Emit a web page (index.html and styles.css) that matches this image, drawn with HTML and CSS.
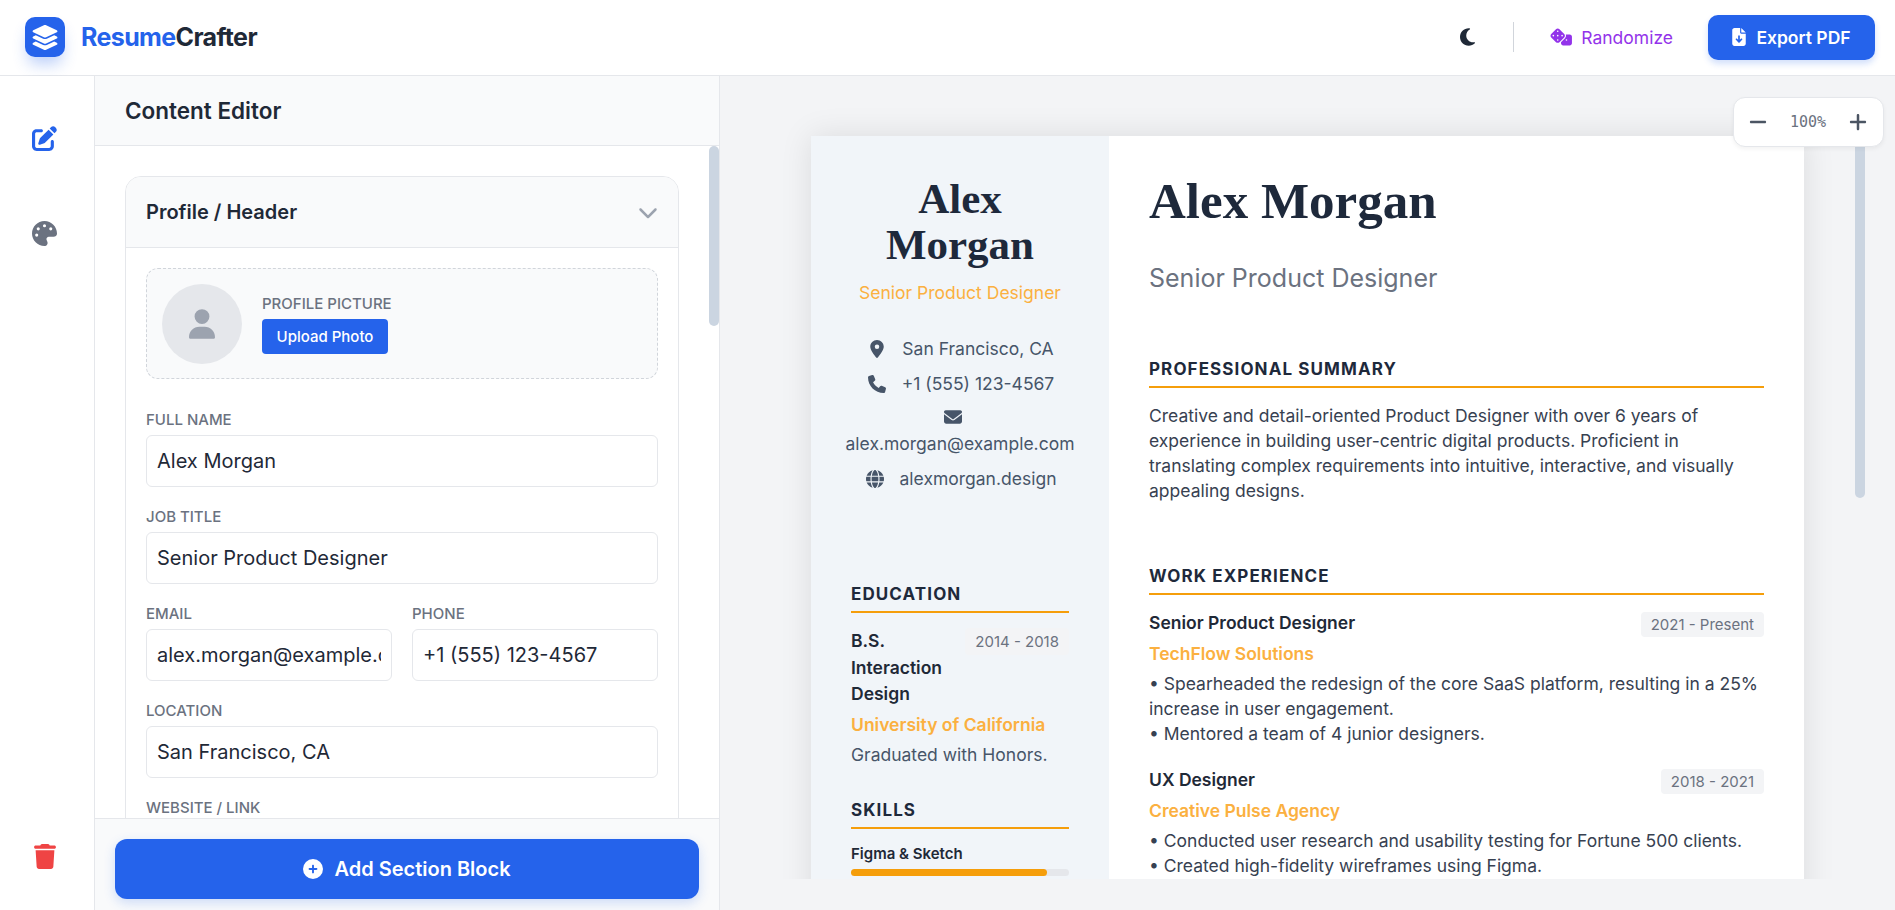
FILE: index.html
```html
<!DOCTYPE html>
<html lang="en">
<head>
  <meta charset="UTF-8" />
  <meta name="viewport" content="width=device-width, initial-scale=1.0"/>
  <title>ResumeCrafter</title>
  <link rel="stylesheet" href="styles.css">
</head>
<body>

<header class="topbar">
  <div class="brand">
    <div class="brand-logo">
      <svg viewBox="0 0 576 512" class="logo-icon"><path d="M264.5 5.2c14.9-6.9 32.1-6.9 47 0l218.6 101c8.5 3.9 13.9 12.4 13.9 21.8s-5.4 17.9-13.9 21.8l-218.6 101c-14.9 6.9-32.1 6.9-47 0L45.9 149.8C37.4 145.8 32 137.3 32 128s5.4-17.9 13.9-21.8L264.5 5.2zM476.9 209.6l53.2 24.6c8.5 3.9 13.9 12.4 13.9 21.8s-5.4 17.9-13.9 21.8l-218.6 101c-14.9 6.9-32.1 6.9-47 0L45.9 277.8C37.4 273.8 32 265.3 32 256s5.4-17.9 13.9-21.8l53.2-24.6 152 70.2c23.4 10.8 50.4 10.8 73.8 0l152-70.2zm-152 198.2l152-70.2 53.2 24.6c8.5 3.9 13.9 12.4 13.9 21.8s-5.4 17.9-13.9 21.8l-218.6 101c-14.9 6.9-32.1 6.9-47 0L45.9 405.8C37.4 401.8 32 393.3 32 384s5.4-17.9 13.9-21.8l53.2-24.6 152 70.2c23.4 10.8 50.4 10.8 73.8 0z"/></svg>
    </div>
    <div class="brand-name"><span class="brand-accent">Resume</span>Crafter</div>
  </div>
  <div class="top-actions">
    <svg viewBox="0 0 384 512" class="moon-icon"><path d="M223.5 32C100 32 0 132.3 0 256S100 480 223.5 480c60.6 0 115.5-24.2 155.8-63.4c5-4.9 6.3-12.5 3.1-18.7s-10.1-9.7-17-8.5c-9.8 1.7-19.8 2.6-30.1 2.6c-96.9 0-175.5-78.8-175.5-176c0-65.8 36-123.1 89.3-153.3c6.1-3.5 9.2-10.5 7.7-17.3s-7.3-11.9-14.3-12.5c-6.3-.5-12.6-.8-19-.8z"/></svg>
    <div class="top-divider"></div>
    <button class="btn-random">
      <svg viewBox="0 0 640 512" class="dice-icon"><path d="M274.9 34.3c-28.1-28.1-73.7-28.1-101.8 0L34.3 173.1c-28.1 28.1-28.1 73.7 0 101.8L173.1 413.7c28.1 28.1 73.7 28.1 101.8 0L413.7 274.9c28.1-28.1 28.1-73.7 0-101.8L274.9 34.3zM200 224a24 24 0 1 1 48 0 24 24 0 1 1 -48 0zM96 200a24 24 0 1 1 0 48 24 24 0 1 1 0-48zM224 376a24 24 0 1 1 0-48 24 24 0 1 1 0 48zM352 200a24 24 0 1 1 0 48 24 24 0 1 1 0-48zM224 120a24 24 0 1 1 0-48 24 24 0 1 1 0 48zm96 328c0 35.3 28.7 64 64 64H576c35.3 0 64-28.7 64-64V256c0-35.3-28.7-64-64-64H461.7c11.6 36 3.1 77-25.4 105.5L320 413.8V448zM480 328a24 24 0 1 1 0 48 24 24 0 1 1 0-48z"/></svg>
      Randomize
    </button>
    <button class="btn-export">
      <svg viewBox="0 0 384 512" class="export-icon"><path d="M64 0C28.7 0 0 28.7 0 64V448c0 35.3 28.7 64 64 64H320c35.3 0 64-28.7 64-64V160H256c-17.7 0-32-14.3-32-32V0H64zM256 0V128H384L256 0zM216 232V334.1l31-31c9.4-9.4 24.6-9.4 33.9 0s9.4 24.6 0 33.9l-72 72c-9.4 9.4-24.6 9.4-33.9 0l-72-72c-9.4-9.4-9.4-24.6 0-33.9s24.6-9.4 33.9 0l31 31V232c0-13.3 10.7-24 24-24s24 10.7 24 24z"/></svg>
      Export PDF
    </button>
  </div>
</header>

<div class="workspace">
  <nav class="rail">
    <svg viewBox="0 0 512 512" class="rail-icon rail-edit"><path d="M471.6 21.7c-21.9-21.9-57.3-21.9-79.2 0L362.3 51.7l97.9 97.9 30.1-30.1c21.9-21.9 21.9-57.3 0-79.2L471.6 21.7zm-299.2 220c-6.1 6.1-10.8 13.6-13.5 21.9l-29.6 88.8c-2.9 8.6-.6 18.1 5.8 24.6s15.9 8.7 24.6 5.8l88.8-29.6c8.2-2.7 15.7-7.4 21.9-13.5L437.7 172.3 339.7 74.3 172.4 241.7zM96 64C43 64 0 107 0 160V416c0 53 43 96 96 96H352c53 0 96-43 96-96V320c0-17.7-14.3-32-32-32s-32 14.3-32 32v96c0 17.7-14.3 32-32 32H96c-17.7 0-32-14.3-32-32V160c0-17.7 14.3-32 32-32h96c17.7 0 32-14.3 32-32s-14.3-32-32-32H96z"/></svg>
    <svg viewBox="0 0 512 512" class="rail-icon rail-palette"><path d="M512 256c0 .9 0 1.8 0 2.7c-.4 36.5-33.6 61.3-70.1 61.3H344c-26.5 0-48 21.5-48 48c0 3.4 .4 6.7 1 9.9c2.1 10.2 6.5 20 10.8 29.9c6.1 13.8 12.1 27.5 12.1 42c0 31.8-21.6 60.7-53.4 62c-3.5 .1-7 .2-10.6 .2C114.6 512 0 397.4 0 256S114.6 0 256 0S512 114.6 512 256zM128 288a32 32 0 1 0 -64 0 32 32 0 1 0 64 0zm0-96a32 32 0 1 0 0-64 32 32 0 1 0 0 64zM288 96a32 32 0 1 0 -64 0 32 32 0 1 0 64 0zm96 96a32 32 0 1 0 0-64 32 32 0 1 0 0 64z"/></svg>
    <svg viewBox="0 0 448 512" class="rail-icon rail-trash"><path d="M135.2 17.7L128 32H32C14.3 32 0 46.3 0 64S14.3 96 32 96H416c17.7 0 32-14.3 32-32s-14.3-32-32-32H320l-7.2-14.3C307.4 6.8 296.3 0 284.2 0H163.8c-12.1 0-23.2 6.8-28.6 17.7zM416 128H32L53.2 467c1.6 25.3 22.6 45 47.9 45H346.9c25.3 0 46.3-19.7 47.9-45L416 128z"/></svg>
  </nav>

  <section class="editor">
    <div class="editor-title">Content Editor</div>
    <div class="editor-scroll">
      <div class="card">
        <div class="card-head">
          <span>Profile / Header</span>
          <svg viewBox="0 0 512 512" class="chevron"><path d="M233.4 406.6c12.5 12.5 32.8 12.5 45.3 0l192-192c12.5-12.5 12.5-32.8 0-45.3s-32.8-12.5-45.3 0L256 338.7 86.6 169.4c-12.5-12.5-32.8-12.5-45.3 0s-12.5 32.8 0 45.3l192 192z"/></svg>
        </div>
        <div class="card-body">
          <div class="photo-box">
            <div class="avatar">
              <svg viewBox="0 0 448 512" class="avatar-icon"><path d="M224 256A128 128 0 1 0 224 0a128 128 0 1 0 0 256zm-45.7 48C79.8 304 0 383.8 0 482.3C0 498.7 13.3 512 29.7 512H418.3c16.4 0 29.7-13.3 29.7-29.7C448 383.8 368.2 304 269.7 304H178.3z"/></svg>
            </div>
            <div class="photo-info">
              <label class="field-label">Profile Picture</label>
              <button class="btn-upload">Upload Photo</button>
            </div>
          </div>

          <div class="field">
            <label class="field-label">Full Name</label>
            <input type="text" value="Alex Morgan" />
          </div>
          <div class="field">
            <label class="field-label">Job Title</label>
            <input type="text" value="Senior Product Designer" />
          </div>
          <div class="field-row">
            <div class="field">
              <label class="field-label">Email</label>
              <input type="text" value="alex.morgan@example.com" />
            </div>
            <div class="field">
              <label class="field-label">Phone</label>
              <input type="text" value="+1 (555) 123-4567" />
            </div>
          </div>
          <div class="field">
            <label class="field-label">Location</label>
            <input type="text" value="San Francisco, CA" />
          </div>
          <div class="field">
            <label class="field-label">Website / Link</label>
            <input type="text" value="alexmorgan.design" />
          </div>
        </div>
      </div>
    </div>
    <div class="scroll-thumb editor-thumb"></div>
    <div class="editor-foot">
      <button class="btn-add">
        <svg viewBox="0 0 512 512" class="add-icon"><path d="M256 512A256 256 0 1 0 256 0a256 256 0 1 0 0 512zM232 344V280H168c-13.3 0-24-10.7-24-24s10.7-24 24-24h64V168c0-13.3 10.7-24 24-24s24 10.7 24 24v64h64c13.3 0 24 10.7 24 24s-10.7 24-24 24H280v64c0 13.3-10.7 24-24 24s-24-10.7-24-24z"/></svg>
        Add Section Block
      </button>
    </div>
  </section>

  <main class="preview">
    <div class="scroll-thumb preview-thumb"></div>
    <div class="zoom-box">
      <svg viewBox="0 0 448 512" class="zoom-icon"><path d="M432 256c0 17.7-14.3 32-32 32L48 288c-17.7 0-32-14.3-32-32s14.3-32 32-32l352 0c17.7 0 32 14.3 32 32z"/></svg>
      <span class="zoom-value">100%</span>
      <svg viewBox="0 0 448 512" class="zoom-icon"><path d="M256 80c0-17.7-14.3-32-32-32s-32 14.3-32 32V224H48c-17.7 0-32 14.3-32 32s14.3 32 32 32H192V432c0 17.7 14.3 32 32 32s32-14.3 32-32V288H400c17.7 0 32-14.3 32-32s-14.3-32-32-32H256V80z"/></svg>
    </div>

    <div class="preview-scroll">
      <div class="sheet">
        <aside class="sheet-side">
          <div class="side-name">Alex Morgan</div>
          <div class="side-title">Senior Product Designer</div>

          <div class="contact">
            <div class="contact-row">
              <svg viewBox="0 0 384 512" class="contact-icon"><path d="M215.7 499.2C267 435 384 279.4 384 192C384 86 298 0 192 0S0 86 0 192c0 87.4 117 243 168.3 307.2c12.3 15.3 35.1 15.3 47.4 0zM192 128a64 64 0 1 1 0 128 64 64 0 1 1 0-128z"/></svg>
              <span>San Francisco, CA</span>
            </div>
            <div class="contact-row">
              <svg viewBox="0 0 512 512" class="contact-icon"><path d="M164.9 24.6c-7.7-18.6-28-28.5-47.4-23.2l-88 24C12.1 30.2 0 46 0 64C0 311.4 200.6 512 448 512c18 0 33.8-12.1 38.6-29.5l24-88c5.3-19.4-4.6-39.7-23.2-47.4l-96-40c-16.3-6.8-35.2-2.1-46.3 11.6L304.7 368C234.3 334.7 177.3 277.7 144 207.3L193.3 167c13.7-11.2 18.4-30 11.6-46.3l-40-96z"/></svg>
              <span>+1 (555) 123-4567</span>
            </div>
            <div class="contact-row contact-wrap">
              <svg viewBox="0 0 512 512" class="contact-icon"><path d="M48 64C21.5 64 0 85.5 0 112c0 15.1 7.1 29.3 19.2 38.4L236.8 313.6c11.4 8.5 27 8.5 38.4 0L492.8 150.4c12.1-9.1 19.2-23.3 19.2-38.4c0-26.5-21.5-48-48-48H48zM0 176V384c0 35.3 28.7 64 64 64H448c35.3 0 64-28.7 64-64V176L294.4 339.2c-22.8 17.1-53.9 17.1-76.8 0L0 176z"/></svg>
              <span>alex.morgan@example.com</span>
            </div>
            <div class="contact-row">
              <svg viewBox="0 0 512 512" class="contact-icon"><path d="M352 256c0 22.2-1.2 43.6-3.3 64H163.3c-2.2-20.4-3.3-41.8-3.3-64s1.2-43.6 3.3-64H348.7c2.2 20.4 3.3 41.8 3.3 64zm28.8-64H503.9c5.3 20.5 8.1 41.9 8.1 64s-2.8 43.5-8.1 64H380.8c2.1-20.6 3.2-42 3.2-64s-1.1-43.4-3.2-64zm112.6-32H376.7c-10-63.9-29.8-117.4-55.3-151.6c78.3 20.7 142 77.5 172.9 151.6zm-149.1 0H167.7c6.1-36.4 15.5-68.6 27-94.7c10.5-23.6 22.2-40.7 33.5-51.5C239.4 3.2 248.7 0 256 0s16.6 3.2 27.8 13.8c11.3 10.8 23 27.9 33.5 51.5c11.6 26 20.9 58.2 27 94.7zm-209 0H18.6C49.6 85.9 113.2 29.1 191.6 8.4C166.1 42.6 146.3 96.1 136.3 160zM8.1 192H131.2c-2.1 20.6-3.2 42-3.2 64s1.1 43.4 3.2 64H8.1C2.8 299.5 0 278.1 0 256s2.8-43.5 8.1-64zM194.7 446.6c-11.6-26-20.9-58.2-27-94.6H344.3c-6.1 36.4-15.5 68.6-27 94.6c-10.5 23.6-22.2 40.7-33.5 51.5C272.6 508.8 263.3 512 256 512s-16.6-3.2-27.8-13.8c-11.3-10.8-23-27.9-33.5-51.5zM135.7 352c10 63.9 29.8 117.4 55.3 151.6C112.7 482.9 49 426.1 18.1 352H135.7zm358.1 0c-30.9 74.1-94.6 130.9-172.9 151.6c25.5-34.2 45.2-87.7 55.3-151.6H493.8z"/></svg>
              <span>alexmorgan.design</span>
            </div>
          </div>

          <div class="side-section">
            <h3 class="section-head">Education</h3>
            <div class="edu-top">
              <div class="edu-degree">B.S. Interaction Design</div>
              <div class="edu-date">2014 - 2018</div>
            </div>
            <div class="org-name">University of California</div>
            <div class="edu-note">Graduated with Honors.</div>
          </div>

          <div class="side-section skills">
            <h3 class="section-head">Skills</h3>
            <div class="skill-name">Figma &amp; Sketch</div>
            <div class="skill-track"><div class="skill-fill" style="width: 90%"></div></div>
          </div>
        </aside>

        <div class="sheet-main">
          <h1 class="main-name">Alex Morgan</h1>
          <div class="main-title">Senior Product Designer</div>

          <section class="main-section">
            <h3 class="section-head">Professional Summary</h3>
            <p class="summary">Creative and detail-oriented Product Designer with over 6 years of experience in building user-centric digital products. Proficient in translating complex requirements into intuitive, interactive, and visually appealing designs.</p>
          </section>

          <section class="main-section">
            <h3 class="section-head">Work Experience</h3>
            <div class="job">
              <div class="job-top">
                <div class="job-role">Senior Product Designer</div>
                <div class="job-date">2021 - Present</div>
              </div>
              <div class="org-name">TechFlow Solutions</div>
              <div class="job-text">• Spearheaded the redesign of the core SaaS platform, resulting in a 25% increase in user engagement.<br>• Mentored a team of 4 junior designers.</div>
            </div>
            <div class="job">
              <div class="job-top">
                <div class="job-role">UX Designer</div>
                <div class="job-date">2018 - 2021</div>
              </div>
              <div class="org-name">Creative Pulse Agency</div>
              <div class="job-text">• Conducted user research and usability testing for Fortune 500 clients.<br>• Created high-fidelity wireframes using Figma.</div>
            </div>
          </section>
        </div>
      </div>
    </div>
  </main>
</div>

</body>
</html>
```

FILE: styles.css
```css
* { box-sizing: border-box; margin: 0; padding: 0; }
html, body { height: 100%; overflow: hidden; }
body { font-family: "Inter", "Noto Sans", sans-serif; color: #1f2937; background: #fff; display: flex; flex-direction: column; }
button { font-family: inherit; border: none; cursor: pointer; }
svg { fill: currentColor; display: block; flex-shrink: 0; }

/* top bar */
.topbar { height: 76px; flex-shrink: 0; display: flex; align-items: center; justify-content: space-between; padding: 0 20px 1px 25px; background: #fff; border-bottom: 1px solid #e5e7eb; }
.brand { display: flex; align-items: center; gap: 16px; }
.brand-logo { width: 40px; height: 40px; border-radius: 10px; background: #2563eb; color: #fff; display: flex; align-items: center; justify-content: center; box-shadow: 0 10px 15px -3px rgba(37,99,235,0.3); }
.logo-icon { width: 28px; height: 25px; }
.brand-name { font-size: 25px; font-weight: 700; letter-spacing: -0.625px; color: #1f2937; }
.brand-accent { color: #2563eb; }
.top-actions { display: flex; align-items: center; }
.moon-icon { width: 15px; height: 20px; color: #1f2937; }
.top-divider { width: 1px; height: 30px; background: #d1d5db; margin: 0 36px 0 38px; }
.btn-random { display: flex; align-items: center; gap: 9px; background: none; color: #9333ea; font-size: 17.5px; font-weight: 400; margin-right: 35px; }
.dice-icon { width: 22px; height: 17.5px; }
.btn-export { width: 167px; height: 45px; display: flex; align-items: center; justify-content: center; gap: 10px; background: #2563eb; color: #fff; font-size: 17.5px; font-weight: 600; border-radius: 10px; box-shadow: 0 4px 6px rgba(37,99,235,0.2); }
.export-icon { width: 14px; height: 18px; }

/* layout */
.workspace { flex: 1; min-height: 0; display: flex; }
.rail { width: 95px; flex-shrink: 0; border-right: 1px solid #e5e7eb; display: flex; flex-direction: column; align-items: center; padding: 50px 5px 41px 0; background: #fff; }
.rail-icon { width: 25px; height: 25px; }
.rail-edit { color: #2563eb; }
.rail-palette { color: #6b7280; margin-top: 70px; }
.rail-trash { color: #ef4444; margin-top: auto; width: 22px; }
.scroll-thumb { position: absolute; width: 10px; background: #cbd5e1; border-radius: 5px; }

/* editor panel */
.editor { width: 625px; flex-shrink: 0; position: relative; display: flex; flex-direction: column; border-right: 1px solid #e5e7eb; background: #fff; }
.editor-thumb { top: 70px; right: 0; height: 180px; }
.editor-title { height: 70px; flex-shrink: 0; display: flex; align-items: center; padding: 0 30px; font-size: 22.5px; font-weight: 600; color: #1f2937; background: #f9fafb; border-bottom: 1px solid #e5e7eb; }
.editor-scroll { flex: 1; min-height: 0; overflow: hidden; padding: 30px 40px 30px 30px; }
.card { border: 1px solid #e5e7eb; border-radius: 16px; overflow: hidden; }
.card-head { height: 71px; display: flex; align-items: center; justify-content: space-between; padding: 0 20px; background: #f9fafb; border-bottom: 1px solid #e5e7eb; font-size: 20px; font-weight: 600; color: #1f2937; }
.chevron { width: 20px; height: 20px; color: #9ca3af; }
.card-body { padding: 20px; }
.photo-box { display: flex; align-items: center; gap: 20px; height: 111px; padding: 0 15px; background: #f9fafb; border: 1px dashed #d1d5db; border-radius: 12px; margin-bottom: 32px; }
.photo-info { padding-top: 2px; }
.avatar { width: 80px; height: 80px; border-radius: 50%; background: #e5e7eb; color: #9ca3af; display: flex; align-items: center; justify-content: center; }
.avatar-icon { width: 26px; height: 30px; }
.field { margin-bottom: 21px; min-width: 0; }
.field-label { display: block; font-size: 15px; font-weight: 500; line-height: 18px; color: #6b7280; text-transform: uppercase; margin-bottom: 6px; }
.field input { display: block; width: 100%; height: 52px; padding: 0 10px; border: 1px solid #e5e7eb; border-radius: 6px; font-family: inherit; font-size: 20px; color: #1f2937; background: #fff; outline: none; }
.field-row { display: grid; grid-template-columns: 1fr 1fr; gap: 20px; }
.btn-upload { display: block; width: 126px; height: 35px; background: #2563eb; color: #fff; font-size: 15px; font-weight: 500; border-radius: 4px; }
.editor-foot { position: relative; flex-shrink: 0; padding: 20px 20px 11px; background: #f9fafb; border-top: 1px solid #e5e7eb; }
.btn-add { width: 100%; height: 60px; display: flex; align-items: center; justify-content: center; gap: 11px; background: #2563eb; color: #fff; font-size: 20px; font-weight: 600; border-radius: 12px; box-shadow: 0 4px 12px rgba(37,99,235,0.2); }
.add-icon { width: 20px; height: 20px; }

/* preview */
.preview { flex: 1; min-width: 0; position: relative; padding: 30px 30px 31px; background: #f3f4f6; }
.preview-thumb { top: 30px; right: 30px; height: 392px; z-index: 2; }
.zoom-box { position: absolute; top: 21px; right: 11px; z-index: 5; width: 151px; height: 50px; display: flex; align-items: center; justify-content: space-between; padding: 0 16px 0 15px; background: #fff; border: 1px solid #e5e7eb; border-radius: 12px; box-shadow: 0 2px 4px rgba(0,0,0,0.05); color: #4b5563; }
.zoom-icon { width: 18px; height: 20px; }
.zoom-value { font-family: "DejaVu Sans Mono", monospace; font-size: 15px; color: #6b7280; }
.preview-scroll { height: 100%; overflow: hidden; padding: 30px 51px 0 61px; }
.sheet { width: 993px; min-height: 1404px; display: grid; grid-template-columns: 298px 695px; background: #fff; box-shadow: 0 0 30px rgba(0,0,0,0.1); }

/* resume left column */
.sheet-side { background: #f1f5f9; padding: 40px; }
.side-name { font-family: "Liberation Serif", serif; font-size: 43px; font-weight: 700; line-height: 46px; color: #1e293b; text-align: center; }
.side-title { font-size: 17.5px; line-height: 26px; color: #fbb040; text-align: center; margin-top: 12px; white-space: nowrap; }
.contact { margin-top: 30px; font-size: 17.5px; line-height: 26px; color: #475569; }
.contact-row { display: flex; flex-wrap: wrap; justify-content: center; align-items: center; margin-bottom: 9px; }
.contact-wrap { margin-top: -1px; }
.contact-wrap span { flex-shrink: 0; }
.contact-icon { width: 22px; height: 18px; margin-right: 14px; }
.contact-wrap .contact-icon { margin-top: 3px; margin-bottom: 5px; }
.section-head { font-size: 17px; font-weight: 700; line-height: 24px; letter-spacing: 1.1px; color: #1e293b; text-transform: uppercase; border-bottom: 2px solid #f59e0b; padding-bottom: 5px; margin-bottom: 15px; }
.side-section { margin-top: 90px; }
.skills { margin-top: 30px; }
.edu-top { display: flex; justify-content: space-between; align-items: flex-start; gap: 20px; }
.edu-degree { font-size: 17.5px; font-weight: 600; line-height: 26.5px; color: #1f2937; }
.edu-date { flex-shrink: 0; font-size: 15px; line-height: 21px; padding: 3px 10px; color: #6b7280; background: #f3f4f6; border-radius: 4px; }
.org-name { font-size: 17.5px; font-weight: 600; line-height: 26px; color: #fbb040; margin-top: 4px; }
.edu-note { font-size: 17.5px; line-height: 26px; color: #475569; margin-top: 4px; }
.skill-name { font-size: 15px; font-weight: 600; line-height: 20px; color: #1f2937; }
.skill-track { height: 7px; margin-top: 5px; background: #e5e7eb; border-radius: 4px; }
.skill-fill { height: 100%; background: #f59e0b; border-radius: 4px; }

/* resume main column */
.sheet-main { padding: 34px 40px 40px; }
.main-name { font-family: "Liberation Serif", serif; font-size: 51px; font-weight: 700; line-height: 62px; color: #1e293b; }
.main-title { font-size: 25px; line-height: 36px; color: #6b7280; margin-top: 28px; }
.main-section { margin-top: 61px; }
.summary { font-size: 17.5px; line-height: 25px; color: #374151; }
.job { margin-bottom: 20.5px; }
.job-top { display: flex; justify-content: space-between; align-items: flex-start; padding-top: 2px; }
.job-role { font-size: 17.5px; font-weight: 600; line-height: 22px; color: #1f2937; }
.job-date { font-size: 15px; line-height: 21px; padding: 2px 10px; color: #6b7280; background: #f3f4f6; border-radius: 4px; }
.job-top + .org-name { margin-top: 4px; }
.job-text { font-size: 17.5px; line-height: 25px; color: #374151; margin-top: 4px; }
```
